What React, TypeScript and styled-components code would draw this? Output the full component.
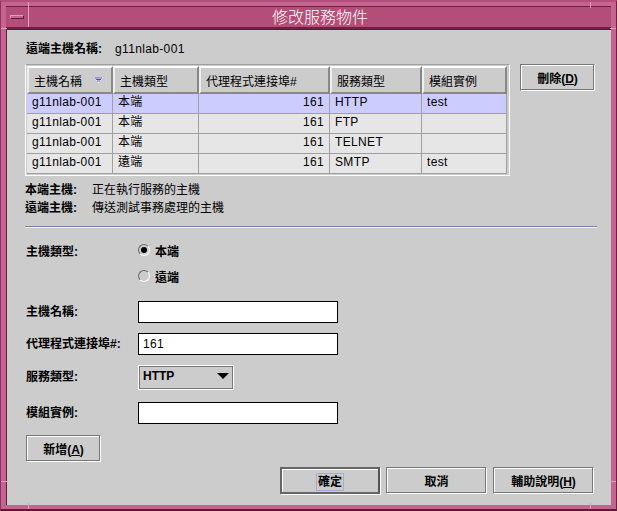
import React from 'react';
import styled, { createGlobalStyle } from 'styled-components';

const CJK = '"Liberation Sans", "Noto Sans CJK TC", sans-serif';

const Global = createGlobalStyle`
  html, body { margin: 0; padding: 0; background: #ccc; }
  body { font-family: ${CJK}; -webkit-font-smoothing: none; }
`;

const Frame = styled.div`
  position: relative;
  width: 617px;
  height: 511px;
  box-sizing: border-box;
  background: #c5658f;
  border-top: 2px solid #b34e78;
  border-left: 1px solid #8a3560;
  border-right: 1px solid #6b1f42;
  border-bottom: 2px solid #5e1a3a;
  padding: 4px 5px 4px 5px;
  display: flex;
  flex-direction: column;
  overflow: hidden;
`;
const Tick = styled.i<{ $v?: boolean }>`
  position: absolute;
  background: #e0a0bc;
  ${p => (p.$v ? 'width: 1px; height: 6px;' : 'height: 1px; width: 6px;')}
`;
const TitleBar = styled.header`
  height: 23px;
  flex: none;
  display: flex;
  background: #b34e78;
  border-top: 1px solid #6b1f42;
  border-bottom: 2px solid #6b1f42;
  box-sizing: border-box;
`;
const MenuBox = styled.div`
  width: 22px;
  flex: none;
  display: flex;
  align-items: center;
  justify-content: center;
  border-right: 1px solid #e0a0bc;
`;
const MenuGlyph = styled.span`
  width: 14px;
  height: 4px;
  box-sizing: border-box;
  background: #c5658f;
  border: 1px solid #e0a0bc;
  border-right-color: #5e1a3a;
  border-bottom-color: #5e1a3a;
`;
const Title = styled.h1`
  flex: 1;
  margin: 0;
  text-align: center;
  font-size: 16px;
  line-height: 19px;
  font-weight: 300;
  color: #fff;
  font-family: "Noto Sans CJK TC", sans-serif;
`;
const Content = styled.main`
  flex: 1;
  background: #ccc;
  border-left: 1px solid #5e1a3a;
  border-top: 1px solid #5e1a3a;
  padding: 11px 17px 0 19px;
  display: flex;
  flex-direction: column;
  font-size: 12px;
  color: #000;
  min-height: 0;
`;
const HostLine = styled.div`
  height: 16px;
  display: flex;
  align-items: center;
  gap: 13px;
  line-height: 16px;
`;
const Mono = styled.span`
  letter-spacing: 0.35px;
`;
const BoldText = styled.span`
  font-weight: 700;
  color: #000;
`;
const TopRow = styled.div`
  margin-top: 7px;
  display: flex;
  align-items: flex-start;
  margin-left: -1px;
`;
const TableWrap = styled.div`
  width: 485px;
  height: 112px;
  box-sizing: border-box;
  border: 1px solid;
  border-color: #a0a0a0 #fff #fff #fff;
  padding: 1px 2px 2px 1px;
  background: #999;
  background-clip: content-box;
`;
const Grid = styled.div`
  display: grid;
  grid-template-columns: 86px 86px 131px 92px 85px;
  grid-auto-rows: 20px;
  background: #e6e6e6;
`;
const HeadCell = styled.div`
  height: 28px;
  box-sizing: border-box;
  background: #ccc;
  border: 2px solid;
  border-color: #fff #888 #888 #eee;
  display: flex;
  align-items: center;
  padding-left: 5px;
  gap: 12px;
  white-space: nowrap;
  font-size: 12px;
`;
const HeadRow = styled.div`
  display: grid;
  grid-template-columns: 86px 86px 131px 92px 85px;
`;
const Cell = styled.div<{ $selected?: boolean; $right?: boolean }>`
  box-sizing: border-box;
  background: ${p => (p.$selected ? '#ccccff' : '#e6e6e6')};
  border-right: 1px solid #a0a0a0;
  border-bottom: 1px solid #a0a0a0;
  padding: 0 5px 0 5px;
  line-height: 16px;
  letter-spacing: 0.35px;
  text-align: ${p => (p.$right ? 'right' : 'left')};
  white-space: nowrap;
`;
const Notes = styled.div`
  margin-top: 5px;
  display: grid;
  grid-template-columns: 67px auto;
  justify-content: start;
  grid-auto-rows: 18px;
  line-height: 18px;
  margin-left: -1px;
`;
const Rule = styled.hr`
  margin: 9px 0 0 -1px;
  width: 572px;
  height: 1px;
  border: 0;
  background: #8080a8;
  box-shadow: 0 1px 0 #eee;
`;
const Form = styled.form`
  margin: 10px 0 0;
  display: grid;
  grid-template-columns: 112px auto;
  justify-content: start;
  align-items: center;
`;
const RadioRow = styled.label`
  height: 26px;
  display: flex;
  align-items: center;
  gap: 5px;
  font-weight: 700;
`;
const RadioDot = styled.span<{ $on?: boolean }>`
  width: 12px;
  height: 12px;
  box-sizing: border-box;
  border-radius: 50%;
  border: 1px solid;
  border-color: #666 #fff #fff #666;
  display: flex;
  align-items: center;
  justify-content: center;
  &::after {
    content: '';
    width: 6px;
    height: 6px;
    border-radius: 50%;
    background: ${p => (p.$on ? '#000' : 'transparent')};
  }
`;
const TextField = styled.input`
  display: block;
  width: 200px;
  height: 22px;
  box-sizing: border-box;
  border: 1px solid #000;
  background: #fff;
  padding: 0 4px;
  font: 12px ${CJK};
  letter-spacing: 0.35px;
  outline: none;
`;
const FieldLabel = styled.span<{ $gap: number }>`
  font-weight: 700;
  margin-top: ${p => p.$gap}px;
  margin-bottom: 4px;
`;
const FieldSlot = styled.div<{ $gap: number }>`
  margin-top: ${p => p.$gap}px;
`;
const SelectBox = styled.div`
  width: 96px;
  height: 25px;
  box-sizing: border-box;
  border: 1px solid #fff;
  box-shadow: inset 1px 1px 0 #777, inset -1px -1px 0 #777;
  display: flex;
  align-items: center;
  justify-content: space-between;
  padding: 0 4px 3px 4px;
  font-weight: 700;
`;
const Btn = styled.button<{ $w: number; $h?: number }>`
  width: ${p => p.$w}px;
  height: ${p => p.$h ?? 27}px;
  box-sizing: border-box;
  flex: none;
  background: #ccc;
  border: 1px solid;
  border-color: #777 #fff #fff #777;
  box-shadow: inset -1px -1px 0 #777, inset 1px 1px 0 #fff;
  padding: 0;
  font: 700 12px ${CJK};
  color: #000;
`;
const DeleteButton = styled(Btn)`
  margin-left: 10px;
`;
const DefaultBtn = styled(Btn)`
  border: 2px solid #666;
  border-right-color: #555;
  box-shadow: 1px 1px 0 #fff, inset 1px 1px 0 #fff;
`;
const FocusText = styled.span`
  outline: 1px solid #a8a8d8;
  padding: 1px;
`;
const AddWrap = styled.div`
  margin-top: 11px;
`;
const Footer = styled.div`
  margin-top: 5px;
  display: flex;
  justify-content: flex-end;
  gap: 6px;
`;
const rows = [
  ['g11nlab-001', '本端', '161', 'HTTP', 'test'],
  ['g11nlab-001', '本端', '161', 'FTP', ''],
  ['g11nlab-001', '本端', '161', 'TELNET', ''],
  ['g11nlab-001', '遠端', '161', 'SMTP', 'test'],
];

const SortIcon = () => (
  <svg width="9" height="7" viewBox="0 0 9 7">
    <path d="M0.5 0.5H8.5L4.5 6.5Z" fill="#fff" />
    <path d="M1 1H8M2 2.5H7M3 4H6" stroke="#5050b0" strokeWidth="1" />
  </svg>
);

export default function App() {
  return (
    <>
      <Global />
      <Frame>
        <Tick $v style={{ left: 27, top: 0 }} />
        <Tick $v style={{ right: 25, top: 0 }} />
        <Tick $v style={{ left: 27, bottom: 0 }} />
        <Tick $v style={{ right: 25, bottom: 0 }} />
        <Tick style={{ left: 0, top: 26 }} />
        <Tick style={{ right: 0, top: 26 }} />
        <Tick style={{ left: 0, bottom: 27 }} />
        <Tick style={{ right: 0, bottom: 27 }} />
        <TitleBar>
          <MenuBox><MenuGlyph /></MenuBox>
          <Title>修改服務物件</Title>
        </TitleBar>
        <Content>
          <HostLine>
            <BoldText>遠端主機名稱:</BoldText>
            <Mono>g11nlab-001</Mono>
          </HostLine>
          <TopRow>
            <TableWrap>
              <HeadRow>
                <HeadCell>主機名稱 <SortIcon /></HeadCell>
                <HeadCell>主機類型</HeadCell>
                <HeadCell>代理程式連接埠#</HeadCell>
                <HeadCell>服務類型</HeadCell>
                <HeadCell>模組實例</HeadCell>
              </HeadRow>
              <Grid>
                {rows.map((r, i) =>
                  r.map((c, j) => (
                    <Cell key={`${i}-${j}`} $selected={i === 0} $right={j === 2}>{c}</Cell>
                  )),
                )}
              </Grid>
            </TableWrap>
            <DeleteButton type="button" $w={75}>刪除(<u>D</u>)</DeleteButton>
          </TopRow>
          <Notes>
            <BoldText>本端主機:</BoldText><span>正在執行服務的主機</span>
            <BoldText>遠端主機:</BoldText><span>傳送測試事務處理的主機</span>
          </Notes>
          <Rule />
          <Form>
            <BoldText>主機類型:</BoldText>
            <RadioRow><RadioDot $on />本端</RadioRow>
            <span />
            <RadioRow><RadioDot />遠端</RadioRow>
            <FieldLabel $gap={12}>主機名稱:</FieldLabel>
            <FieldSlot $gap={12}><TextField /></FieldSlot>
            <FieldLabel $gap={10}>代理程式連接埠#:</FieldLabel>
            <FieldSlot $gap={10}><TextField defaultValue="161" /></FieldSlot>
            <FieldLabel $gap={10}>服務類型:</FieldLabel>
            <FieldSlot $gap={10}>
              <SelectBox>HTTP
                <svg width="12" height="6" viewBox="0 0 12 6"><path d="M0 0H12L6 6Z" fill="#000" /></svg>
              </SelectBox>
            </FieldSlot>
            <FieldLabel $gap={12}>模組實例:</FieldLabel>
            <FieldSlot $gap={12}><TextField /></FieldSlot>
          </Form>
          <AddWrap><Btn type="button" $w={75}>新增(<u>A</u>)</Btn></AddWrap>
          <Footer>
            <DefaultBtn type="button" $w={100}><FocusText>確定</FocusText></DefaultBtn>
            <Btn type="button" $w={101}>取消</Btn>
            <Btn type="button" $w={101}>輔助說明(<u>H</u>)</Btn>
          </Footer>
        </Content>
      </Frame>
    </>
  );
}
